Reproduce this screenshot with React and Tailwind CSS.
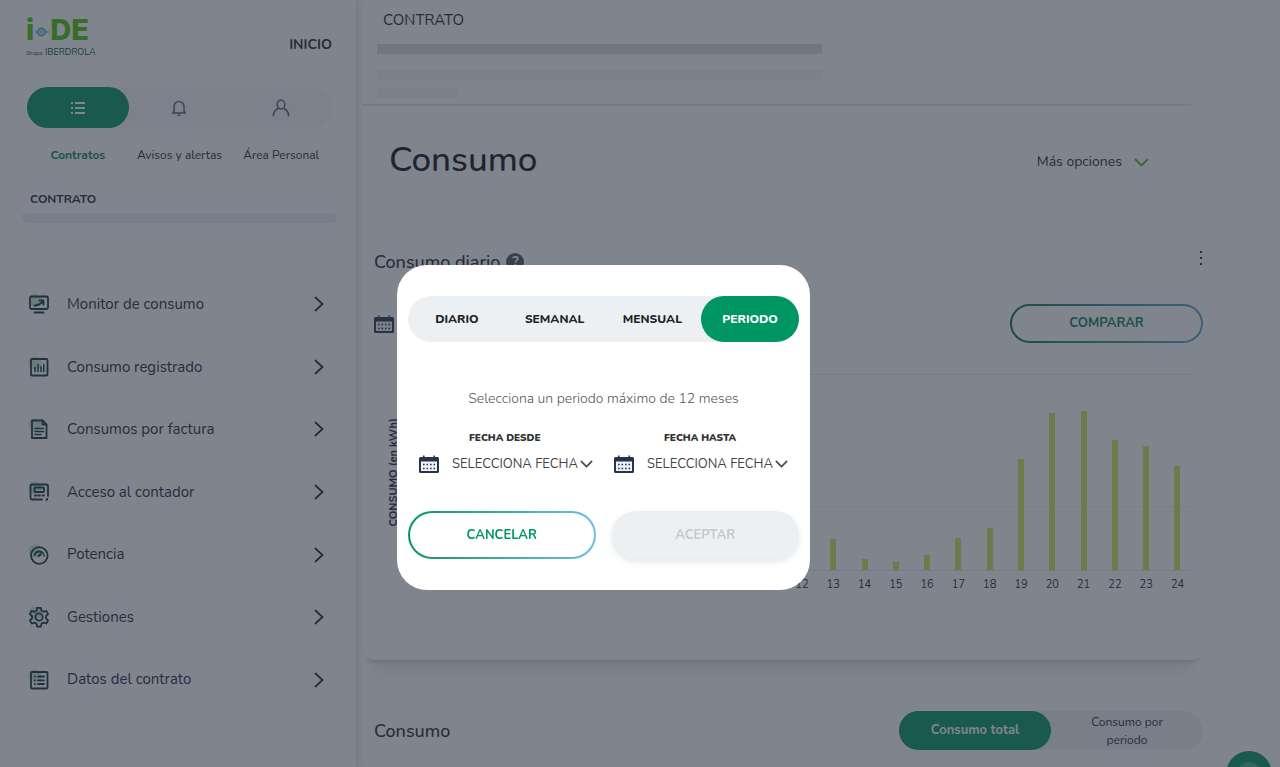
import { useState } from "react";

const TABS = ["DIARIO", "SEMANAL", "MENSUAL", "PERIODO"];

// kWh per hour, from 1 to 24
const HOURS = [
  12, 9, 8, 8, 10, 14, 22, 30, 24, 20, 18, 26, 31, 11, 8, 15, 32, 42, 111, 157,
  159, 130, 124, 104,
];

const MENU = [
  { label: "Monitor de consumo", Icon: MonitorIcon },
  { label: "Consumo registrado", Icon: ChartIcon },
  { label: "Consumos por factura", Icon: InvoiceIcon },
  { label: "Acceso al contador", Icon: MeterIcon },
  { label: "Potencia", Icon: GaugeIcon },
  { label: "Gestiones", Icon: GearIcon },
  { label: "Datos del contrato", Icon: ListIcon },
];

function MenuSvg({ children }) {
  return (
    <svg
      viewBox="0 0 24 24"
      className="h-6 w-6 shrink-0"
      fill="none"
      stroke="#16303c"
      strokeWidth="1.8"
      strokeLinecap="round"
      strokeLinejoin="round"
      aria-hidden="true"
    >
      <circle cx="8" cy="8" r="6.500" fill="#9fe0b0" opacity="0.6" stroke="none" />
      {children}
    </svg>
  );
}

function MonitorIcon() {
  return (
    <MenuSvg>
      <rect x="3" y="4.5" width="18" height="12.5" rx="1.5" />
      <path d="M7.500 13.500c4 0 6-1.500 8.500-4M12.500 8.500h4v4" />
      <path d="M7.500 20.500h9" />
    </MenuSvg>
  );
}

function ChartIcon() {
  return (
    <MenuSvg>
      <rect x="4" y="4" width="16.500" height="16.500" rx="1" />
      <path d="M8 16.500v-4M11 16.500v-7M14 16.500v-5M16.800 16.500v-7" strokeWidth="1.500" />
    </MenuSvg>
  );
}

function InvoiceIcon() {
  return (
    <MenuSvg>
      <path d="M5 3.500h10.500l4 4v13.500H5z" />
      <path d="M15.500 3.500v4h4" />
      <path d="M8 11.500h8.500M8 14.500h8.500M8 17.500h6" strokeWidth="1.500" />
    </MenuSvg>
  );
}

function MeterIcon() {
  return (
    <MenuSvg>
      <path d="M15 19.500H5a1.500 1.500 0 0 1-1.500-1.500V6A1.500 1.500 0 0 1 5 4.500h14.500A1.500 1.500 0 0 1 21 6v10" />
      <rect x="7.500" y="7.500" width="9.500" height="4.500" rx="1" />
      <path d="M8 15.500h1.500M11.500 15.500H13M15.500 15.500H17M19.500 20.200l.8-1.400" />
    </MenuSvg>
  );
}

function GaugeIcon() {
  return (
    <MenuSvg>
      <circle cx="12.300" cy="12.500" r="8.300" />
      <path d="M7.500 12.200c.8-2.400 2.600-3.700 4.800-3.700 1.800 0 3.300.9 4.200 2.300M17 12.600v.1" />
      <path d="M11.800 12.800l1.800-1.300" strokeWidth="2.200" />
    </MenuSvg>
  );
}

function GearIcon() {
  return (
    <MenuSvg>
      <circle cx="12" cy="12" r="3.600" />
      <path d="M10.200 2.800h3.600l.7 2.900 1.900 1.100 2.900-.9 1.800 3.200-2.200 2v2.200l2.200 2-1.800 3.200-2.900-.9-1.900 1.100-.7 2.900h-3.600l-.7-2.900-1.900-1.100-2.900.9-1.800-3.200 2.200-2v-2.200l-2.200-2 1.800-3.200 2.900.9 1.900-1.100z" />
    </MenuSvg>
  );
}

function ListIcon() {
  return (
    <MenuSvg>
      <rect x="4" y="4" width="16.500" height="16.500" rx="1" />
      <path d="M7.800 8.500h.2M7.800 12.300h.2M7.800 16h.2M11 8.500h6M11 12.300h6M11 16h6" />
    </MenuSvg>
  );
}

function Chevron({ className, d = "M1.500 1.500l6 6 6-6", box = "0 0 15 9" }) {
  return (
    <svg
      viewBox={box}
      className={className}
      fill="none"
      stroke="currentColor"
      strokeWidth="1.8"
      strokeLinecap="round"
      aria-hidden="true"
    >
      <path d={d} />
    </svg>
  );
}

function CalendarIcon() {
  return (
    <svg viewBox="0 0 20 18" className="h-[18px] w-5 shrink-0" aria-hidden="true">
      <path
        d="M1.500 2H4V.5h1.500V2h9V.5H16V2h2.500A1.500 1.500 0 0 1 20 3.500v13a1.500 1.500 0 0 1-1.500 1.500h-17A1.500 1.500 0 0 1 0 16.500v-13A1.500 1.500 0 0 1 1.500 2z"
        fill="#26334d"
      />
      <path d="M2 6.500h16v9.500h-16z" fill="#eef3fb" />
      <path
        d="M4 9.500h1.600M7.500 9.500h1.600M11 9.500h1.600M14.500 9.500h1.600M4 13.500h1.600M7.500 13.500h1.600M11 13.500h1.600M14.500 13.500h1.600"
        stroke="#26334d"
        strokeWidth="1.600"
      />
    </svg>
  );
}

function Logo() {
  return (
    <a href="#" className="flex flex-col text-[#46c800]">
      <span className="flex items-center font-['Inter',sans-serif] text-[29px] leading-[32px] font-extrabold">
        i
        <svg viewBox="0 0 16 12" className="mt-1 h-3 w-4" aria-hidden="true">
          <circle cx="7.500" cy="6" r="3.500" fill="#cdeaff" stroke="#62b4ff" strokeWidth="2" />
          <path d="M1 6h3M11 6h4" stroke="#62b4ff" strokeWidth="1.500" />
          <path d="M6 6h3" stroke="#46d400" strokeWidth="1.200" />
        </svg>
        DE
      </span>
      <span className="text-[9px] leading-3 text-[#004a48]">
        <span className="text-[6px]">Grupo</span> IBERDROLA
      </span>
    </a>
  );
}

function Sidebar() {
  return (
    <aside className="flex w-[356px] shrink-0 flex-col bg-white shadow-[0_0_8px_#c8ccd8]">
      <div className="flex items-end justify-between pt-3.5 pr-6 pl-[26px]">
        <Logo />
        <a href="#" className="pb-1 text-sm font-bold text-[#1e2438]">
          INICIO
        </a>
      </div>

      <nav className="mt-7 mr-6 ml-[27px]">
        <div className="grid grid-cols-3 rounded-full bg-[#f8f8fb]">
          <button
            aria-label="Contratos"
            className="flex h-[41px] items-center justify-center rounded-full bg-[#009360]"
          >
            <svg viewBox="0 0 16 14" className="h-3.5 w-4" stroke="#fff" strokeWidth="1.8" aria-hidden="true">
              <path d="M1 2h2M5 2h10M1 7h2M5 7h10M1 12h2M5 12h10" />
            </svg>
          </button>
          <button aria-label="Avisos y alertas" className="flex h-[41px] items-center justify-center">
            <svg viewBox="0 0 16 18" className="h-[18px] w-4" fill="none" stroke="#5a6078" strokeWidth="1.500" aria-hidden="true">
              <path d="M3 12.500V7.500a5 5 0 0 1 10 0v5l1.500 1.500h-13z" strokeLinejoin="round" />
              <path d="M6.500 16.200h3" />
            </svg>
          </button>
          <button aria-label="Área Personal" className="flex h-[41px] items-center justify-center">
            <svg viewBox="0 0 18 18" className="h-[18px] w-[18px]" fill="none" stroke="#5a6078" strokeWidth="1.500" aria-hidden="true">
              <ellipse cx="9" cy="5.500" rx="3.800" ry="4.500" />
              <path d="M1.500 17.500v-1.500c0-3 2-5 4.500-6.500M16.500 17.500v-1.500c0-3-2-5-4.500-6.500" />
            </svg>
          </button>
        </div>
        <div className="mt-[19px] grid grid-cols-3 text-center text-xs leading-4 text-[#1e2438]">
          <span className="font-bold text-[#007f62]">Contratos</span>
          <span>Avisos y alertas</span>
          <span>Área Personal</span>
        </div>
      </nav>

      <h2 className="mt-7 ml-[30px] text-xs font-bold text-[#1e2438]">CONTRATO</h2>
      <div className="mt-1.5 mr-5 ml-[22px] h-2.5 rounded bg-[#eeedf4]" />

      <ul className="mt-[50px] grid h-[438px] auto-rows-fr">
        {MENU.map(({ label, Icon }) => (
          <li key={label} className="flex">
            <a
              href="#"
              className="flex flex-1 items-center pr-8 pl-[27px] text-[15px] text-[#1e2438]"
            >
              <Icon />
              <span className="ml-4 flex-1">{label}</span>
              <Chevron className="h-4 w-2.5" box="0 0 10 16" d="M1.500 1.500L8.500 8l-7 6.500" />
            </a>
          </li>
        ))}
      </ul>
    </aside>
  );
}

function HourChart() {
  return (
    <div className="flex pl-3">
      <span className="mb-[22px] rotate-180 self-center text-center text-[11px] leading-4 font-bold [writing-mode:vertical-rl]">
        CONSUMO (en kWh)
      </span>
      <div className="mr-2.5 ml-10 flex-1">
        <div className="flex h-[197px] flex-col border-y border-[#e6e7f2]">
          <div className="flex h-full items-end bg-[linear-gradient(#f0f1f9,#f0f1f9)] bg-[length:100%_1px] bg-[position:0_131px] bg-no-repeat">
            {HOURS.map((height, i) => (
              <div key={i} className="flex flex-1 justify-center">
                <div className="w-1.5 bg-[#cce85a]" style={{ height }} />
              </div>
            ))}
          </div>
        </div>
        <div className="mt-1.5 flex text-center text-[11px] leading-4">
          {HOURS.map((_, i) => (
            <span key={i} className="flex-1">
              {i + 1}
            </span>
          ))}
        </div>
      </div>
    </div>
  );
}

function Main() {
  return (
    <main className="mr-[77px] ml-1.5 min-w-0 flex-1 text-[#1e2438]">
      <header className="mr-3 h-[106px] border-b-2 border-[#e6e7f0] pt-2.5 pl-[15px]">
        <h2 className="pl-1.5 text-[15px] leading-5">CONTRATO</h2>
        <div className="mt-3.5 h-2.5 w-[445px] bg-[#dcdfe7]" />
        <div className="mt-4 h-2.5 w-[445px] bg-[#f6f4f9]" />
        <div className="mt-2 h-2.5 w-20 bg-[#f3f8f5]" />
      </header>

      <section className="rounded-b-xl pb-[67px] shadow-[0_5px_5px_-4px_#bcbccb,0_24px_14px_-12px_#efeef5]">
        <div className="flex items-center justify-between pt-8 pr-[54px] pl-[27px]">
          <h1 className="text-[35px] leading-[44px] font-medium text-[#0a0f18]">Consumo</h1>
          <button className="mt-1 flex items-center gap-3 text-sm">
            Más opciones
            <Chevron className="h-[9px] w-[15px] text-[#50b428]" />
          </button>
        </div>

        <div className="mt-[68px] flex items-start justify-between pl-3">
          <h3 className="flex items-center gap-1.5 text-lg leading-6 font-medium">
            Consumo diario
            <span className="flex h-[18px] w-[18px] items-center justify-center rounded-full bg-[#4a5060] text-sm font-bold text-white">
              ?
            </span>
          </h3>
          <button aria-label="Más acciones" className="flex h-4 w-1 flex-col items-center justify-between py-px">
            <span className="h-0.5 w-0.5 bg-current" />
            <span className="h-0.5 w-0.5 bg-current" />
            <span className="h-0.5 w-0.5 bg-current" />
          </button>
        </div>

        <div className="mt-[30px] mb-[31px] flex items-center justify-between pl-3">
          <CalendarIcon />
          <button className="w-[193px] rounded-full bg-linear-to-r from-[#00705a] to-[#5aa8c8] p-0.5">
            <span className="block rounded-full bg-white py-2 text-[13px] leading-[19px] font-bold text-[#007f62]">
              COMPARAR
            </span>
          </button>
        </div>

        <div className="pl-3">
          <HourChart />
        </div>
      </section>

      <section className="mt-[51px] flex items-center justify-between pl-3">
        <h3 className="text-lg font-medium">Consumo</h3>
        <div className="grid w-[304px] grid-cols-2 rounded-full bg-[#f0eff4]">
          <button className="h-[39px] rounded-full bg-[#009360] text-[13px] font-bold text-white">
            Consumo total
          </button>
          <button className="px-8 text-xs leading-[18px]">Consumo por periodo</button>
        </div>
      </section>
    </main>
  );
}

function DateField({ id, label }) {
  return (
    <div className="flex flex-col">
      <label htmlFor={id} className="pl-[50px] text-[10px] leading-3 font-black text-[#333]">
        {label}
      </label>
      <div className="mt-2.5 flex items-center">
        <CalendarIcon />
        <select id={id} className="ml-[13px] appearance-none text-[13px] leading-5 text-[#444]">
          <option>SELECCIONA FECHA</option>
        </select>
        <Chevron className="ml-0.5 h-2 w-[13px] text-[#444]" />
      </div>
    </div>
  );
}

function PeriodModal() {
  const [tab, setTab] = useState("PERIODO");

  return (
    <div className="fixed inset-0 flex items-center justify-center bg-[#2b3241]/60 pt-[88px] pr-[73px]">
      <div role="dialog" aria-label="Periodo" className="w-[413px] rounded-[30px] bg-white px-[11px] pt-[31px] pb-[31px]">
        <div className="grid grid-cols-4 rounded-full bg-[#ecf0f3]">
          {TABS.map((name) => (
            <button
              key={name}
              onClick={() => setTab(name)}
              className={`h-[46px] rounded-full text-xs font-extrabold ${
                tab === name ? "bg-[#009664] text-white" : "text-[#222]"
              }`}
            >
              {name}
            </button>
          ))}
        </div>

        <p className="mt-[47px] text-center text-sm font-light text-[#555]">
          Selecciona un periodo máximo de 12 meses
        </p>

        <div className="mt-[23px] grid grid-cols-2 gap-2.5 pl-[11px]">
          <DateField id="desde" label="FECHA DESDE" />
          <DateField id="hasta" label="FECHA HASTA" />
        </div>

        <div className="mt-[37px] grid grid-cols-2 gap-4">
          <button className="rounded-full bg-linear-to-r from-[#00965f] to-[#6abfe0] p-0.5">
            <span className="block rounded-full bg-white py-3 text-[13px] leading-5 font-bold text-[#009664]">
              CANCELAR
            </span>
          </button>
          <button
            disabled
            className="rounded-full bg-[#ecf0f2] text-[13px] leading-5 font-bold text-[#c3c8cb] shadow-[0_3px_6px_#e4e6e8]"
          >
            ACEPTAR
          </button>
        </div>
      </div>
    </div>
  );
}

export default function App() {
  return (
    <div className="flex h-screen overflow-hidden bg-white font-['Nunito','Lato',sans-serif]">
      <Sidebar />
      <Main />
      <button
        aria-label="Ayuda"
        className="fixed right-2 -bottom-[30px] flex h-[46px] w-[46px] items-center justify-center rounded-full bg-[#009360]"
      >
        <span className="h-6 w-6 rounded-full bg-[#3fb58c]" />
      </button>
      <PeriodModal />
    </div>
  );
}
